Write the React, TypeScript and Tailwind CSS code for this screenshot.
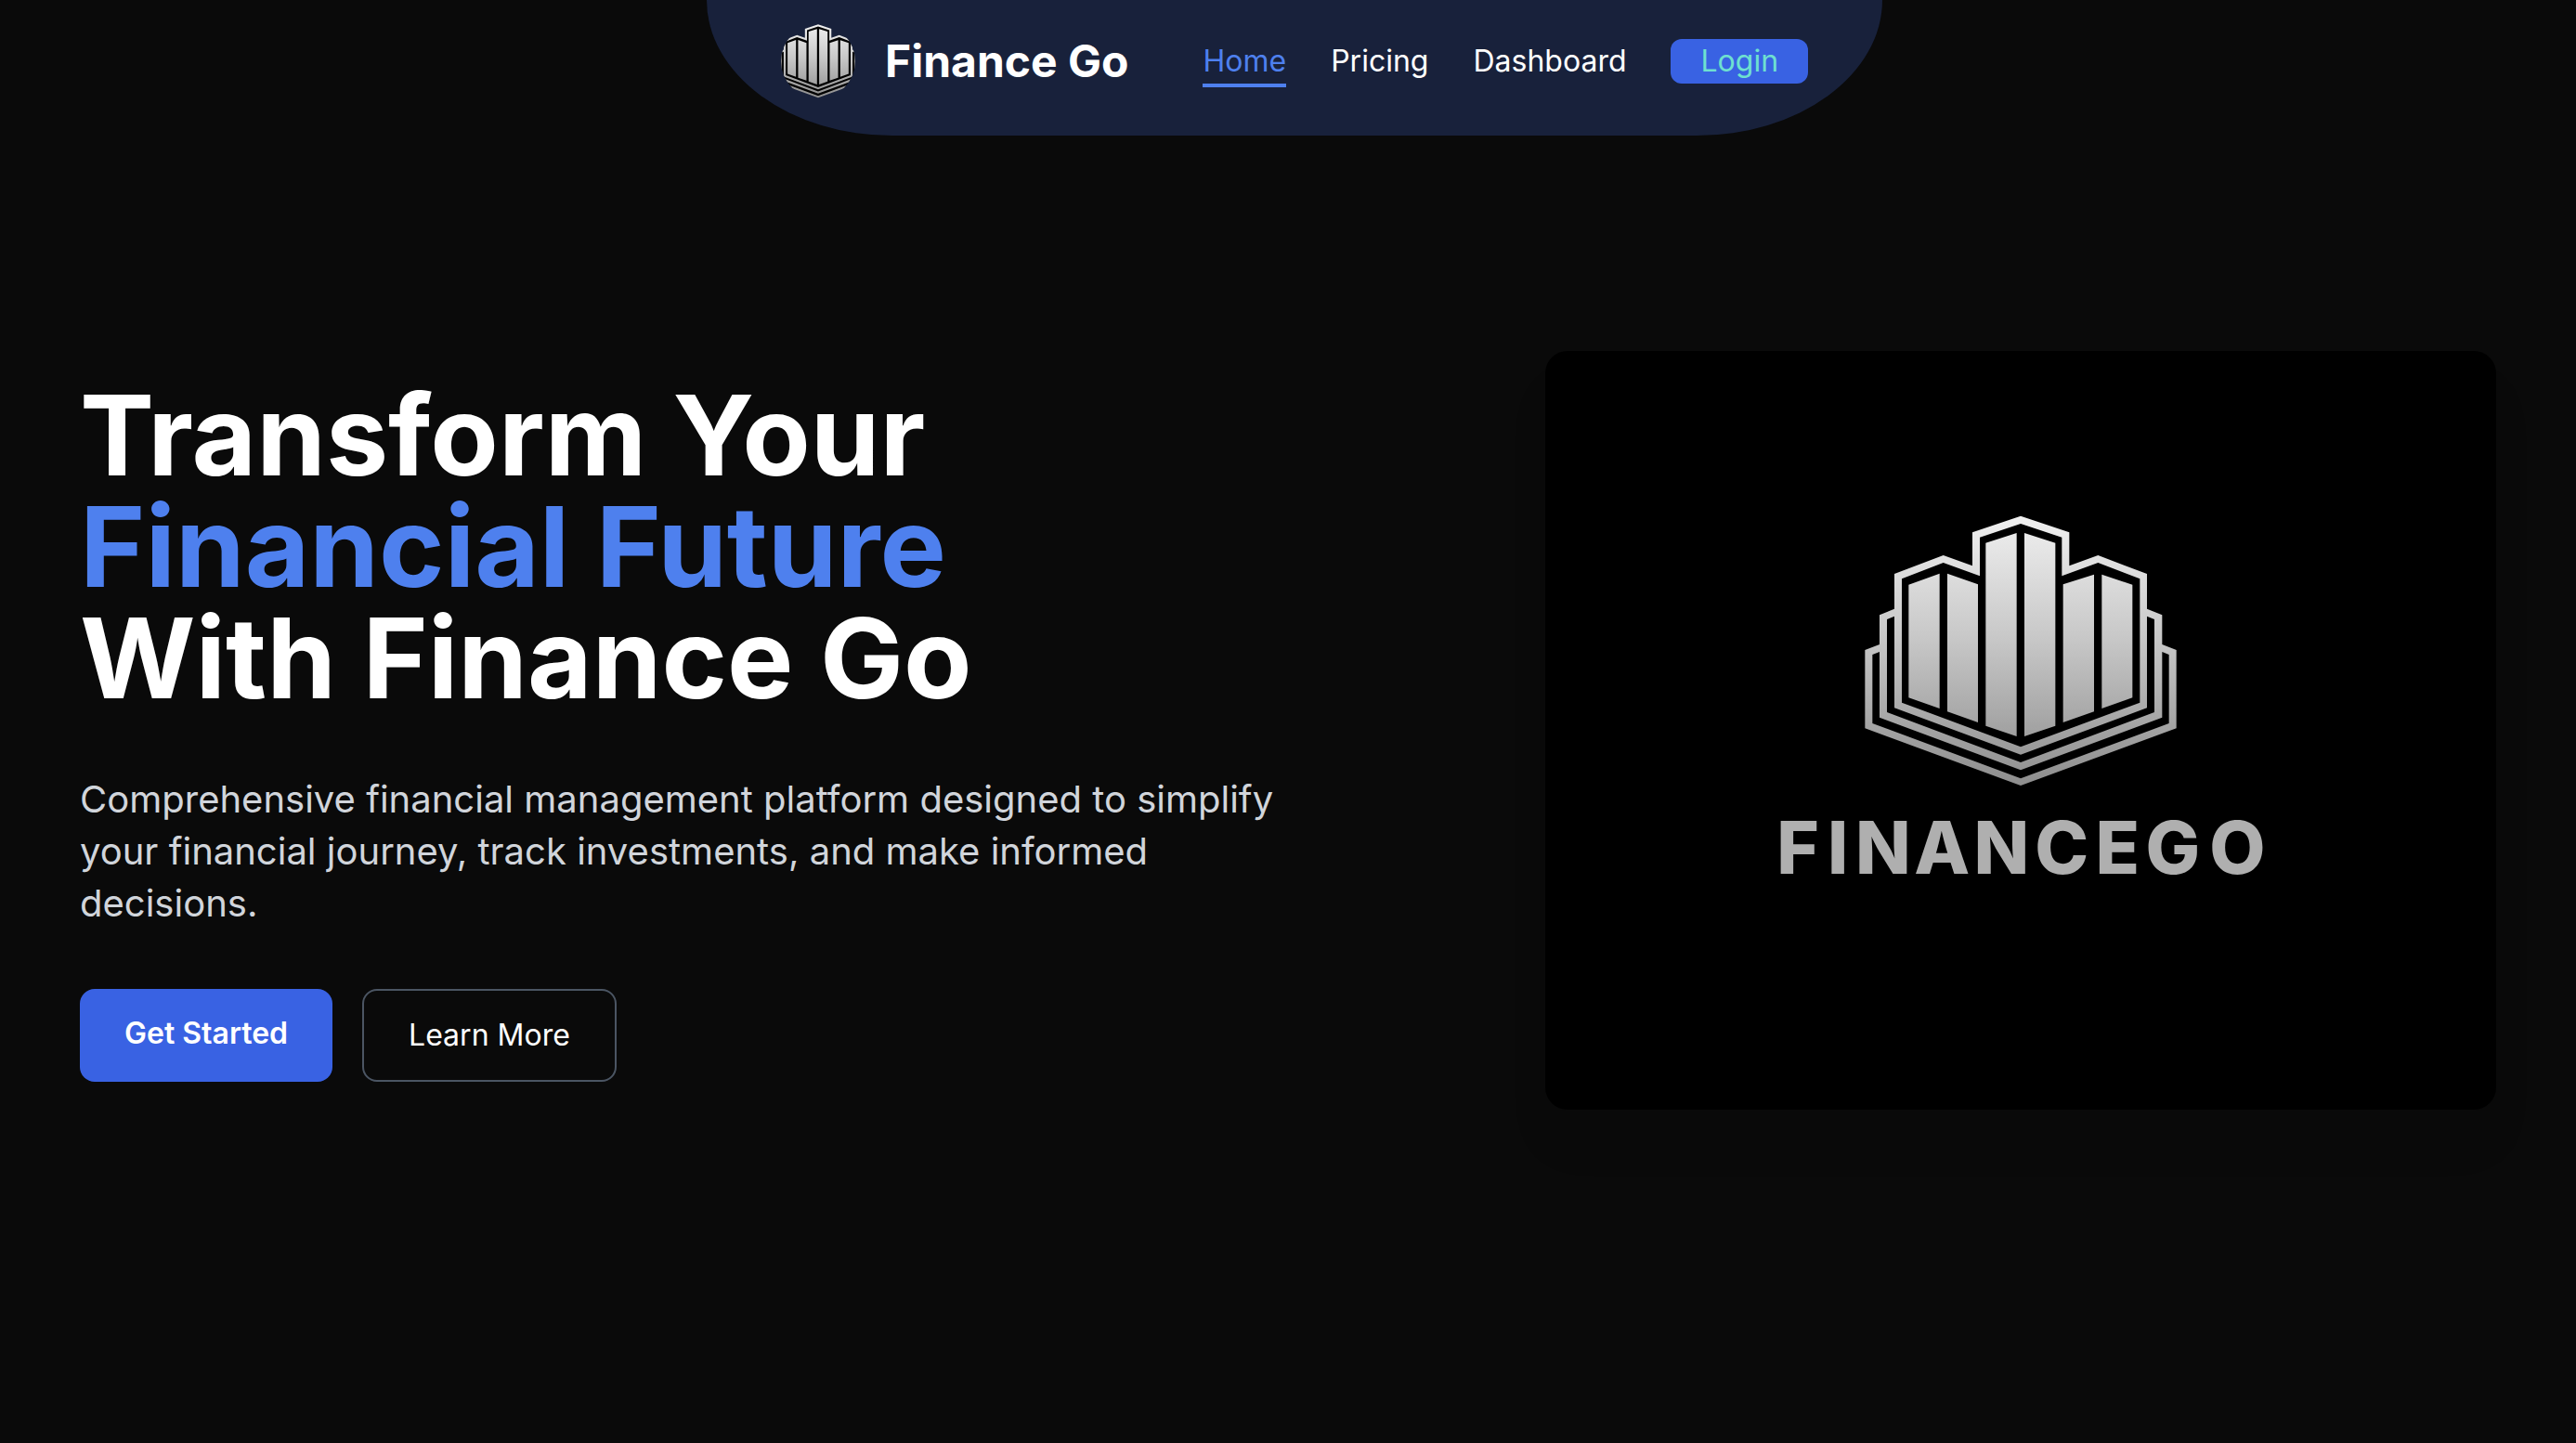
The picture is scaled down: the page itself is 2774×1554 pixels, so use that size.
import React from "react";

function LogoMark({ id, className, viewBox }: { id: string; className: string; viewBox: string }) {
  const fill = `url(#${id})`;
  return (
    <svg viewBox={viewBox} className={className} aria-hidden="true">
      <defs>
        <linearGradient id={id} gradientUnits="userSpaceOnUse" x1="0" y1="47" x2="0" y2="917">
          <stop offset="0" stopColor="#f0f0f0" />
          <stop offset="0.45" stopColor="#c8c8c8" />
          <stop offset="0.8" stopColor="#a2a2a2" />
          <stop offset="1" stopColor="#8e8e8e" />
        </linearGradient>
      </defs>
      {/* dark silhouette behind the mark */}
      <path
        fill="#000"
        d="M588 52 740 104V214L838 180 991 238V350L1040 370V466L1086 484V729L588 912 90 729V484L137 466V370L185 350V238L338 180 437 214V104Z"
      />
      {/* three nested outlines */}
      <path
        fill={fill}
        fillRule="evenodd"
        d="M588 47 745 100V208L838 174 996 234V347L1045 367V462L1091 480V733L588 918 85 733V480L132 462V367L180 347V234L338 174 432 208V100ZM588 72 456 116V241L338 198 204 250V650L588 793 973 650V250L838 198 721 241V116ZM180 371 156 381V681L588 843 1020 681V381L996 371V667L588 818 180 667ZM132 486 109 495V717L588 895 1067 717V495L1045 486V698L588 868 132 698Z"
      />
      {/* six tower faces */}
      <path
        fill={fill}
        d="M226 269 326 233V669L226 634ZM351 233 450 268V714L351 679ZM475 134 575 102V759L475 725ZM600 102 700 134V725L600 759ZM725 268 825 236V679L725 714ZM850 236 949 269V634L850 669Z"
      />
    </svg>
  );
}

export default function App() {
  return (
    <div className="flex h-[1554px] w-[2774px] flex-col overflow-hidden bg-[#0a0a0a] font-['Inter',sans-serif] text-white">
      <header className="ml-[761px] flex h-[146px] w-[1266px] items-start rounded-b-[200px_146px] bg-[#18213b] pt-[26px] pl-20">
        <LogoMark id="nav-metal" viewBox="148 45 880 880" className="size-20 rounded-full" />
        <span className="ml-8 flex h-20 items-center text-[48px] font-bold">Finance Go</span>
        <nav className="ml-20 flex h-20 items-center gap-12 text-[32px]">
          <a className="border-y-4 border-t-transparent border-b-[#4e80ee] text-[#4e80ee]">Home</a>
          <a>Pricing</a>
          <a>Dashboard</a>
          <a className="flex h-12 items-center rounded-xl bg-[#3962e3] px-8 text-[#6ee0d0]">Login</a>
        </nav>
      </header>
      <main className="flex items-start justify-between px-[86px] pt-[232px]">
        <section className="w-[1360px] pt-[31px]">
          <h1 className="text-[120px] leading-[120px] font-bold">
            <span className="block">Transform Your</span>
            <span className="block text-[#4e80ee]">Financial Future</span>
            <span className="block">With Finance Go</span>
          </h1>
          <p className="mt-16 text-[40px] leading-[56px] text-[#d1d5db]">
            Comprehensive financial management platform designed to simplify
            <br />
            your financial journey, track investments, and make informed
            <br />
            decisions.
          </p>
          <div className="mt-16 flex gap-8 text-[32px]">
            <a className="h-[100px] rounded-2xl bg-[#3962e3] px-12 leading-[96px] font-semibold">Get Started</a>
            <a className="h-[100px] rounded-2xl border-2 border-[#4b5563] px-12 leading-[96px]">Learn More</a>
          </div>
        </section>
        <figure className="flex h-[817px] w-[1024px] flex-col items-center rounded-3xl bg-black shadow-[0_40px_50px_-10px_rgba(0,0,0,0.1)]">
          <LogoMark id="hero-metal" viewBox="3 0 1170 960" className="mt-[162px] h-[320px] w-[390px]" />
          <svg viewBox="1891 860 570 100" className="h-[100px] w-[570px] overflow-visible">
            <text
              y="941"
              x="1913.3 1968 1998 2061.3 2125.6 2191.3 2256.6 2310.5 2379.3"
              fontSize="78"
              fontWeight="800"
              fill="#afafaf"
              fontFamily="Inter, sans-serif"
            >
              FINANCEGO
            </text>
          </svg>
        </figure>
      </main>
    </div>
  );
}
